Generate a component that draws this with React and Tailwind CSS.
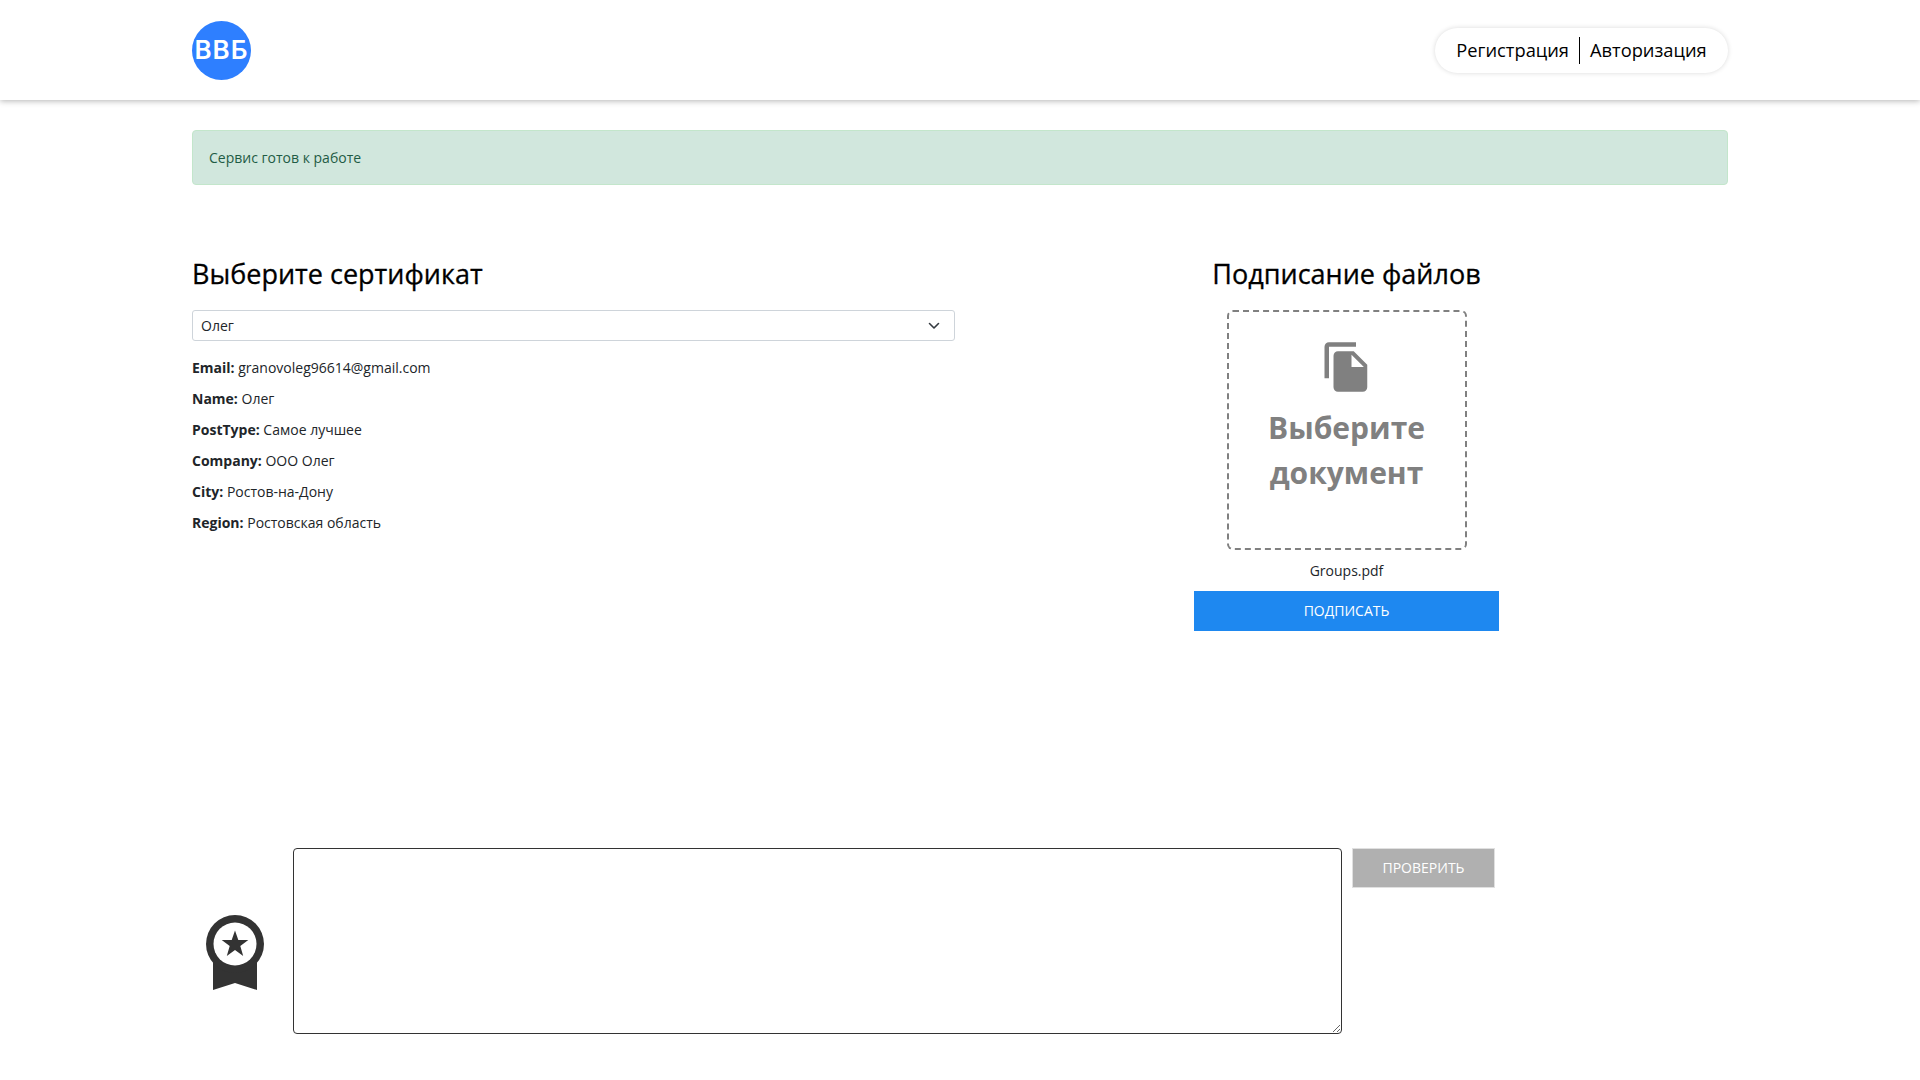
import React from "react";

const rows = [
  ["Email:", "granovoleg96614@gmail.com"],
  ["Name:", "Олег"],
  ["PostType:", "Самое лучшее"],
  ["Company:", "ООО Олег"],
  ["City:", "Ростов-на-Дону"],
  ["Region:", "Ростовская область"],
];

export default function App() {
  return (
    <div className="min-h-[1080px] bg-white text-[#212529] font-['Open_Sans',sans-serif] text-[14px]">
      <header className="h-[100px] bg-white shadow-[0_1px_6px_rgba(0,0,0,0.3)] flex items-center justify-between px-[192px]">
        <div className="w-[59px] h-[59px] rounded-full bg-[#2e7fff] flex items-center justify-center text-white font-['Inter',sans-serif] font-semibold text-[26px] tracking-[1px] leading-none">
          ВВБ
        </div>
        <nav className="h-[45px] w-[293px] rounded-[23px] bg-white shadow-[0_0_5px_rgba(0,0,0,0.15)] flex items-center justify-center text-[18.3px] text-black">
          <span>Регистрация</span>
          <span className="w-px h-[27px] bg-black mx-[10px]"></span>
          <span>Авторизация</span>
        </nav>
      </header>

      <main className="px-[192px] pt-[30px]">
        <div className="h-[55px] rounded-[4px] border border-[#c3e6cb] bg-[#d1e7dd] flex items-center px-[16px] text-[#1f5c45]">
          Сервис готов к работе
        </div>

        <div className="flex mt-[70px]">
          <section className="w-[763px]">
            <h2 className="text-[27px] leading-[37px] font-medium text-black [-webkit-text-stroke:0.3px_black]">Выберите сертификат</h2>
            <div className="mt-[18px] h-[31px] rounded-[3px] border border-[#ced4da] flex items-center justify-between pl-[8px] pr-[12px]">
              <span>Олег</span>
              <svg width="16" height="16" viewBox="0 0 16 16" fill="none" stroke="#343a40" strokeWidth="1.6" strokeLinecap="round" strokeLinejoin="round">
                <path d="M3.5 5.5l4.5 4.5 4.5-4.5" />
              </svg>
            </div>
            <div className="mt-[17px] flex flex-col gap-[12px]">
              {rows.map(([k, v]) => (
                <p key={k} className="leading-[19px]">
                  <b className="font-bold">{k}</b> {v}
                </p>
              ))}
            </div>
          </section>

          <section className="ml-[239px] w-[305px] flex flex-col items-center">
            <h2 className="text-[27px] leading-[37px] font-medium text-black [-webkit-text-stroke:0.3px_black]">Подписание файлов</h2>
            <div className="mt-[18px] w-[240px] h-[240px] rounded-[6px] border-2 border-dashed border-[#808080] flex flex-col items-center pt-[28px] text-[#808080]">
              <svg width="54" height="54" viewBox="0 0 24 24" fill="#808080">
                <path d="M16 1H4c-1.1 0-2 .9-2 2v14h2V3h12V1zm-1 4 6 6v10c0 1.1-.9 2-2 2H7.99C6.89 23 6 22.1 6 21l.01-14c0-1.1.89-2 1.99-2h7zm-1 7h5.5L14 6.5V12z" />
              </svg>
              <div className="mt-[11px] text-[30px] leading-[45px] font-bold text-center">
                Выберите
                <br />
                документ
              </div>
            </div>
            <div className="mt-[11px] leading-[19px]">Groups.pdf</div>
            <button className="mt-[11px] w-[305px] h-[40px] pb-[2px] bg-[#1e88f0] text-white text-[14px] uppercase">Подписать</button>
          </section>
        </div>

        <div className="flex mt-[217px]">
          <div className="w-[101px] flex items-end">
            <svg className="ml-[14px] mb-[44px]" width="58" height="75" viewBox="0 0 58 75">
              <polygon points="7,40 7,75 29,68 51,75 51,40" fill="#333333" />
              <circle cx="29" cy="29" r="29" fill="#333333" />
              <circle cx="29" cy="29" r="21.5" fill="#ffffff" />
              <polygon points="29,15.5 32.3,25 42.3,25 34.3,31 37.2,41 29,35 20.8,41 23.7,31 15.7,25 25.7,25" fill="#333333" />
            </svg>
          </div>
          <textarea className="w-[1049px] h-[186px] rounded-[4px] border border-[#333333] outline-none block"></textarea>
          <button className="ml-[10px] w-[143px] h-[40px] pb-[2px] bg-[#b0b0b0] border border-[#e0e0e0] text-white text-[14px] uppercase">Проверить</button>
        </div>
      </main>
    </div>
  );
}
